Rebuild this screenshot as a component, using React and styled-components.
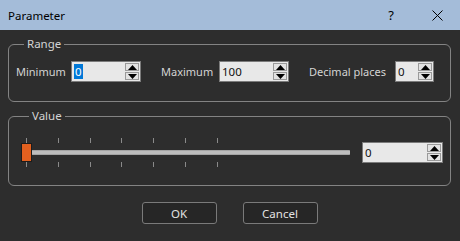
import styled, { createGlobalStyle } from "styled-components";

const GlobalStyle = createGlobalStyle`
  html, body {
    margin: 0;
    padding: 0;
    background: #2d2d2d;
  }
  body {
    font-family: "Noto Sans", "Segoe UI", sans-serif;
    font-size: 11px;
    color: #d4d4d4;
  }
`;

const Dialog = styled.div`
  width: 460px;
  height: 241px;
  display: flex;
  flex-direction: column;
  background: #2d2d2d;
  overflow: hidden;
`;

const TitleBar = styled.div`
  flex: 0 0 30px;
  display: flex;
  align-items: center;
  padding-left: 8px;
  background: #a4bcd9;
  color: #000;
  font-size: 11.5px;
`;

const TitleText = styled.span`
  flex: 1;
`;

const CaptionButton = styled.div`
  width: 46px;
  height: 30px;
  display: flex;
  align-items: center;
  justify-content: center;
  font-size: 13px;
`;

const Body = styled.div`
  display: flex;
  flex-direction: column;
  gap: 7px;
  padding: 7px 9px 0 8px;
`;

const Group = styled.fieldset`
  margin: 0;
  min-width: 0;
  border: 1px solid #838383;
  border-radius: 6px;
  padding: ${(p) => p.$pad};
`;

const Legend = styled.legend`
  margin-left: 8px;
  padding: 0 3px;
  line-height: 14px;
  font-size: 11.5px;
`;

const Row = styled.div`
  display: flex;
  align-items: center;
`;

const Label = styled.span`
  width: ${(p) => p.$w}px;
  margin-left: ${(p) => p.$ml || 0}px;
  white-space: nowrap;
`;

const SpinBox = styled.div`
  box-sizing: border-box;
  display: flex;
  width: ${(p) => p.$w}px;
  height: 21px;
  border: 1px solid #7b7b7b;
  background: #e8e8e8;
`;

const SpinText = styled.div`
  flex: 1;
  display: flex;
  align-items: center;
  padding-left: 2px;
  color: #111;
  font-size: 11.5px;
`;

const Selected = styled.span`
  background: #0078d7;
  color: #fff;
  padding: 0 1px;
  line-height: 15px;
`;

const SpinButtons = styled.div`
  width: 14px;
  display: flex;
  flex-direction: column;
  gap: 1px;
  padding: 1px 1px 1px 0;
  background: #e8e8e8;
`;

const SpinButton = styled.div`
  flex: 1;
  display: flex;
  align-items: center;
  justify-content: center;
  border: 1px solid #9a9a9a;
  background: #e2e2e2;
`;

const SliderWrap = styled.div`
  width: 329px;
  display: grid;
  grid-template-rows: 5px 19px 5px;
`;

const TickRow = styled.div`
  display: flex;
  justify-content: space-between;
  padding: 0 5px;
`;

const Tick = styled.div`
  width: 1px;
  height: 5px;
  background: ${(p) => (p.$on ? "#8a8a8a" : "transparent")};
`;

const Track = styled.div`
  position: relative;
  display: flex;
  align-items: center;
`;

const Groove = styled.div`
  box-sizing: border-box;
  width: 100%;
  height: 5px;
  background: #bdbdbd;
  border-top: 1px solid #a4a4a4;
  border-bottom: 1px solid #a4a4a4;
  border-radius: 1px;
`;

const Handle = styled.div`
  position: absolute;
  left: 0;
  top: 0;
  box-sizing: border-box;
  width: 11px;
  height: 19px;
  background: #e2601f;
  border: 1px solid #1c1c1c;
`;

const ButtonRow = styled.div`
  display: flex;
  justify-content: center;
  gap: 26px;
  margin-top: 9px;
`;

const Button = styled.button`
  box-sizing: border-box;
  width: 75px;
  height: 22px;
  background: #262626;
  border: 1px solid #7a7a7a;
  border-radius: 3px;
  color: #e2e2e2;
  font-family: inherit;
  font-size: 11.5px;
  padding: 0;
`;

const Arrow = ({ up }) => (
  <svg width="9" height="5" viewBox="0 0 9 5">
    <polygon points={up ? "0,5 9,5 4.5,0" : "0,0 9,0 4.5,5"} fill="#000" />
  </svg>
);

const Spin = ({ w, children }) => (
  <SpinBox $w={w}>
    <SpinText>{children}</SpinText>
    <SpinButtons>
      <SpinButton>
        <Arrow up />
      </SpinButton>
      <SpinButton>
        <Arrow />
      </SpinButton>
    </SpinButtons>
  </SpinBox>
);

const ticks = Array.from({ length: 11 }, (_, i) => i < 7);

const Ticks = () => (
  <TickRow>
    {ticks.map((on, i) => (
      <Tick key={i} $on={on} />
    ))}
  </TickRow>
);

const App = () => {
  return (
    <Dialog>
      <GlobalStyle />
      <TitleBar>
        <TitleText>Parameter</TitleText>
        <CaptionButton>?</CaptionButton>
        <CaptionButton>
          <svg width="11" height="11" viewBox="0 0 11 11">
            <path d="M0.5 0.5 L10.5 10.5 M10.5 0.5 L0.5 10.5" stroke="#000" strokeWidth="1" />
          </svg>
        </CaptionButton>
      </TitleBar>
      <Body>
        <Group $pad="10px 7px 19px">
          <Legend>Range</Legend>
          <Row>
            <Label $w={55}>Minimum</Label>
            <Spin w={70}>
              <Selected>0</Selected>
            </Spin>
            <Label $w={58} $ml={20}>Maximum</Label>
            <Spin w={70}>100</Spin>
            <Label $w={86} $ml={20}>Decimal places</Label>
            <Spin w={39}>0</Spin>
          </Row>
        </Group>
        <Group $pad="15px 7px 18px 12px">
          <Legend>Value</Legend>
          <Row>
            <SliderWrap>
              <Ticks />
              <Track>
                <Groove />
                <Handle />
              </Track>
              <Ticks />
            </SliderWrap>
            <Label $w={12} />
            <Spin w={81}>0</Spin>
          </Row>
        </Group>
        <ButtonRow>
          <Button>OK</Button>
          <Button>Cancel</Button>
        </ButtonRow>
      </Body>
    </Dialog>
  );
};

export default App;
